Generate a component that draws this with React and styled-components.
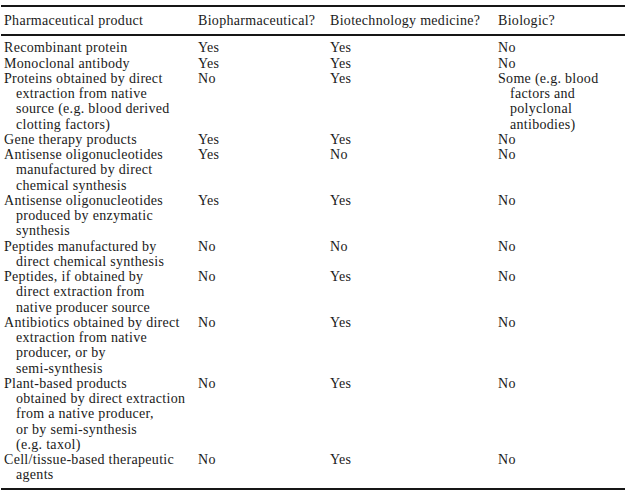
import React from 'react';
import styled, { createGlobalStyle } from 'styled-components';

const GlobalStyle = createGlobalStyle`
  html, body {
    margin: 0;
    padding: 0;
    background: #ffffff;
  }
  body {
    font-family: "Liberation Serif", "Times New Roman", serif;
    color: #1a1a1a;
  }
`;

const rows = [
  { product: ['Recombinant protein'], bio: 'Yes', tech: 'Yes', biologic: ['No'] },
  { product: ['Monoclonal antibody'], bio: 'Yes', tech: 'Yes', biologic: ['No'] },
  {
    product: ['Proteins obtained by direct', 'extraction from native', 'source (e.g. blood derived', 'clotting factors)'],
    bio: 'No',
    tech: 'Yes',
    biologic: ['Some (e.g. blood', 'factors and', 'polyclonal', 'antibodies)'],
  },
  { product: ['Gene therapy products'], bio: 'Yes', tech: 'Yes', biologic: ['No'] },
  {
    product: ['Antisense oligonucleotides', 'manufactured by direct', 'chemical synthesis'],
    bio: 'Yes',
    tech: 'No',
    biologic: ['No'],
  },
  {
    product: ['Antisense oligonucleotides', 'produced by enzymatic', 'synthesis'],
    bio: 'Yes',
    tech: 'Yes',
    biologic: ['No'],
  },
  { product: ['Peptides manufactured by', 'direct chemical synthesis'], bio: 'No', tech: 'No', biologic: ['No'] },
  {
    product: ['Peptides, if obtained by', 'direct extraction from', 'native producer source'],
    bio: 'No',
    tech: 'Yes',
    biologic: ['No'],
  },
  {
    product: ['Antibiotics obtained by direct', 'extraction from native', 'producer, or by', 'semi-synthesis'],
    bio: 'No',
    tech: 'Yes',
    biologic: ['No'],
  },
  {
    product: [
      'Plant-based products',
      'obtained by direct extraction',
      'from a native producer,',
      'or by semi-synthesis',
      '(e.g. taxol)',
    ],
    bio: 'No',
    tech: 'Yes',
    biologic: ['No'],
  },
  { product: ['Cell/tissue-based therapeutic', 'agents'], bio: 'No', tech: 'Yes', biologic: ['No'] },
];

const Lines = ({ lines }) => (
  <>
    {lines.map((line, i) => (
      <Line key={i} $indent={i > 0}>{line}</Line>
    ))}
  </>
);

const App = () => (
  <>
    <GlobalStyle />
    <Page>
      <Table>
        <HeaderRow>
          <HeadCell>Pharmaceutical product</HeadCell>
          <HeadCell>Biopharmaceutical?</HeadCell>
          <HeadCell>Biotechnology medicine?</HeadCell>
          <HeadCell>Biologic?</HeadCell>
        </HeaderRow>
        <Body>
          {rows.map((row, i) => (
            <Row key={i}>
              <Cell><Lines lines={row.product} /></Cell>
              <Cell>{row.bio}</Cell>
              <Cell>{row.tech}</Cell>
              <Cell><Lines lines={row.biologic} /></Cell>
            </Row>
          ))}
        </Body>
      </Table>
    </Page>
  </>
);

export default App;

const Page = styled.div`
  width: 631px;
  height: 493px;
  padding-top: 5px;
  padding-left: 1px;
  box-sizing: border-box;
  overflow: hidden;
`;

const Table = styled.div`
  width: 624px;
  border-top: 2px solid #161616;
  border-bottom: 2px solid #161616;
  font-size: 14px;
  letter-spacing: 0.3px;
  line-height: 15.25px;
`;

const columns = `194px 132px 168px 1fr`;

const HeaderRow = styled.div`
  display: grid;
  grid-template-columns: ${columns};
  padding: 6px 0 6px;
  border-bottom: 2px solid #161616;
`;

const HeadCell = styled.div`
  padding-left: 3px;
`;

const Body = styled.div`
  display: flex;
  flex-direction: column;
  padding: 4px 0 5px;
`;

const Row = styled.div`
  display: grid;
  grid-template-columns: ${columns};
`;

const Cell = styled.div`
  padding-left: 3px;
`;

const Line = styled.div`
  padding-left: ${(p) => (p.$indent ? '12px' : '0')};
  white-space: nowrap;
`;
